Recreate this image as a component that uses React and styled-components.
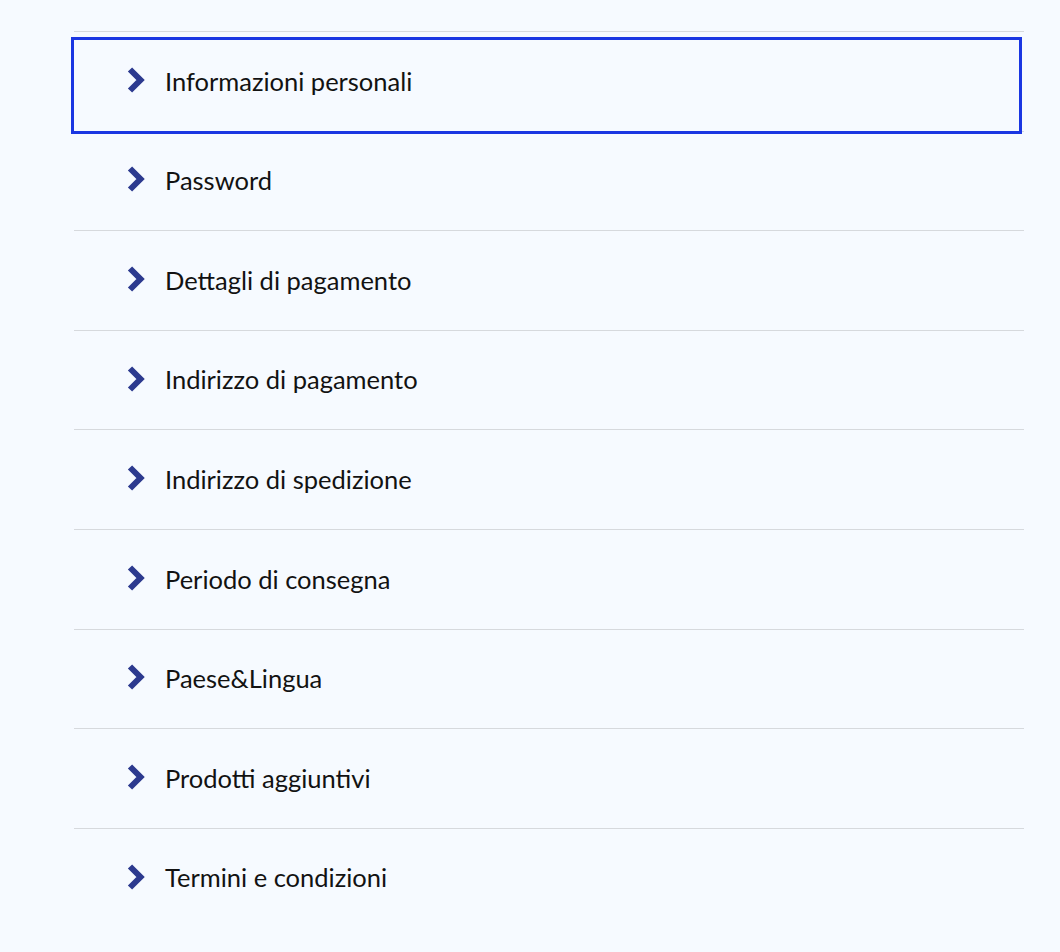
import React from "react"
import styled, { createGlobalStyle } from "styled-components"

const GlobalStyle = createGlobalStyle`
  html, body {
    margin: 0;
    padding: 0;
    background: #f6faff;
  }
  body {
    font-family: "Lato", "Open Sans", sans-serif;
    color: #111;
  }
`

const Page = styled.div`
  min-height: 952px;
  padding: 31px 36px 0 74px;
  background: #f6faff;
`

const List = styled.ul`
  list-style: none;
  margin: 0;
  padding: 0;
  width: 950px;
`

const Item = styled.li`
  border-top: 1px solid #d6d9dd;
`

const Row = styled.button`
  position: relative;
  display: flex;
  align-items: center;
  width: 100%;
  height: 98.6px;
  padding: 0 0 0 53px;
  border: 0;
  background: transparent;
  font-family: inherit;
  font-size: 25.5px;
  color: #121212;
  text-align: left;
  cursor: pointer;

  ${p => p.$focused && `
    &::after {
      content: "";
      position: absolute;
      top: 5px;
      left: -3px;
      right: 2px;
      bottom: -3px;
      border: 3px solid #1a36e2;
      pointer-events: none;
    }
  `}
`

const Chevron = styled.svg`
  flex: none;
  width: 19px;
  height: 26px;
  margin-right: 19px;
  margin-top: -3px;
`

const Label = styled.span`
  line-height: 1;
`

const items = [
  "Informazioni personali",
  "Password",
  "Dettagli di pagamento",
  "Indirizzo di pagamento",
  "Indirizzo di spedizione",
  "Periodo di consegna",
  "Paese&Lingua",
  "Prodotti aggiuntivi",
  "Termini e condizioni",
]

function ChevronIcon() {
  return (
    <Chevron viewBox="0 0 19 26" aria-hidden="true">
      <polyline
        points="3,2.5 13.5,13 3,23.5"
        fill="none"
        stroke="#2c3a8f"
        strokeWidth="6"
        strokeLinejoin="miter"
        strokeLinecap="butt"
      />
    </Chevron>
  )
}

export default function App() {
  return (
    <Page>
      <GlobalStyle />
      <List>
        {items.map((label, i) => (
          <Item key={label}>
            <Row $focused={i === 0}>
              <ChevronIcon />
              <Label>{label}</Label>
            </Row>
          </Item>
        ))}
      </List>
    </Page>
  )
}
